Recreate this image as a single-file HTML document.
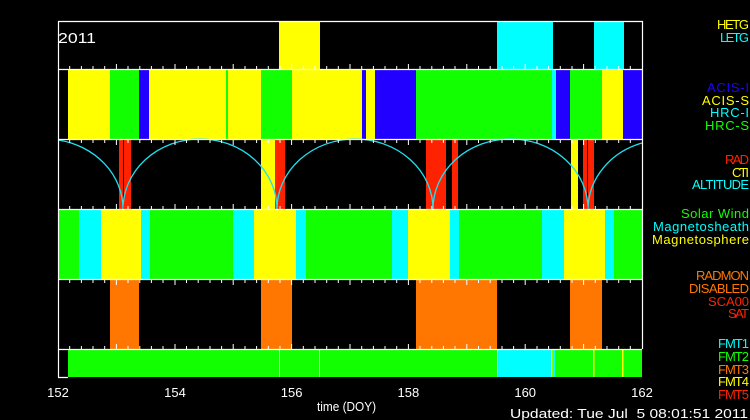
<!DOCTYPE html>
<html><head><style>
html,body{margin:0;padding:0;background:#000;}
svg{display:block;font-family:"Liberation Sans",sans-serif;}
text{white-space:pre;}
</style></head><body>
<svg width="750" height="420" viewBox="0 0 750 420" xmlns="http://www.w3.org/2000/svg">
<rect width="750" height="420" fill="#000"/>
<rect x="279" y="21" width="41" height="48" fill="#ffff00"/>
<rect x="497" y="21" width="56" height="48" fill="#00ffff"/>
<rect x="594" y="21" width="30" height="48" fill="#00ffff"/>
<g transform="translate(0,69)">
<rect x="68" width="42" height="70" fill="#ffff00"/>
<rect x="110" width="29" height="70" fill="#11ff00"/>
<rect x="139" width="10" height="70" fill="#2200ff"/>
<rect x="149" width="112" height="70" fill="#ffff00"/>
<rect x="226" width="2" height="70" fill="#11ff00"/>
<rect x="261" width="31" height="70" fill="#11ff00"/>
<rect x="292" width="70" height="70" fill="#ffff00"/>
<rect x="362" width="4" height="70" fill="#2200ff"/>
<rect x="366" width="9" height="70" fill="#ffff00"/>
<rect x="375" width="41" height="70" fill="#2200ff"/>
<rect x="416" width="136" height="70" fill="#11ff00"/>
<rect x="552" width="4" height="70" fill="#00ffff"/>
<rect x="556" width="14" height="70" fill="#2200ff"/>
<rect x="570" width="32" height="70" fill="#11ff00"/>
<rect x="602" width="21" height="70" fill="#ffff00"/>
<rect x="623" width="19" height="70" fill="#2200ff"/>
</g>
<g transform="translate(0,139)">
<rect x="119" width="12" height="70" fill="#ff2200"/>
<rect x="123" width="1" height="70" fill="#000"/>
<rect x="261" width="14" height="70" fill="#ffff00"/>
<rect x="275" width="10" height="70" fill="#ff2200"/>
<rect x="426" width="20" height="70" fill="#ff2200"/>
<rect x="452" width="6" height="70" fill="#ff2200"/>
<rect x="571" width="7" height="70" fill="#ffff00"/>
<rect x="583" width="4" height="70" fill="#ff2200"/>
<rect x="588" width="6" height="70" fill="#ff2200"/>
</g>
<path d="M58,140 A77.5,70 0 0 1 123,209 A77,70 0 0 1 277,209 A78,70 0 0 1 433,209 A77.5,70 0 0 1 588,209 A77,70 0 0 1 642,143" fill="none" stroke="#22e0f0" stroke-width="1.3"/>
<g transform="translate(0,209)">
<rect x="58" width="584" height="70" fill="#11ff00"/>
<rect x="79" width="22" height="70" fill="#00ffff"/>
<rect x="101" width="40" height="70" fill="#ffff00"/>
<rect x="141" width="9" height="70" fill="#00ffff"/>
<rect x="233" width="21" height="70" fill="#00ffff"/>
<rect x="254" width="42" height="70" fill="#ffff00"/>
<rect x="296" width="10" height="70" fill="#00ffff"/>
<rect x="392" width="16" height="70" fill="#00ffff"/>
<rect x="408" width="42" height="70" fill="#ffff00"/>
<rect x="450" width="9" height="70" fill="#00ffff"/>
<rect x="542" width="22" height="70" fill="#00ffff"/>
<rect x="564" width="41" height="70" fill="#ffff00"/>
<rect x="605" width="9" height="70" fill="#00ffff"/>
</g>
<g transform="translate(0,279)" fill="#ff7700">
<rect x="110" width="29" height="70"/>
<rect x="261" width="31" height="70"/>
<rect x="416" width="81" height="70"/>
<rect x="570" width="32" height="70"/>
</g>
<g transform="translate(0,350)">
<rect x="68" width="574" height="27" fill="#11ff00"/>
<rect x="497" width="54" height="27" fill="#00ffff"/>
<rect x="553" width="2" height="27" fill="#00ffff"/>
<rect x="279" width="1" height="27" fill="#ffff00"/>
<rect x="319" width="1" height="27" fill="#ffff00"/>
<rect x="497" width="1" height="27" fill="#ffff00"/>
<rect x="551" width="1.5" height="27" fill="#ffff00"/>
<rect x="593" width="1.5" height="27" fill="#ffff00"/>
<rect x="622" width="1.5" height="27" fill="#ffff00"/>
</g>
<g stroke="#fff" stroke-width="1.2" fill="none">
<path d="M58.5,377 V21.5 H642.5 V349"/>
<path d="M58,69.5 H642 M58,139.5 H642 M58,209.5 H642 M58,279.5 H642 M58,349.5 H642 M58,377.5 H68"/>
</g>
<g stroke="#fff" stroke-width="1" id="tk">
<path d="M69.7,349v-3 M81.4,349v-3 M93,349v-3 M104.7,349v-3 M116.4,349v-5 M128,349v-3 M139.8,349v-3 M151.4,349v-3 M163,349v-3 M175,349v-5 M186.5,349v-3 M198.2,349v-3 M210,349v-3 M221.6,349v-3 M233.2,349v-5 M245,349v-3 M256.6,349v-3 M268.3,349v-3 M280,349v-3 M291.6,349v-5 M303.3,349v-3 M315,349v-3 M326.7,349v-3 M338.3,349v-3 M350,349v-5 M361.7,349v-3 M373.4,349v-3 M385,349v-3 M396.7,349v-3 M408.4,349v-5 M420,349v-3 M431.8,349v-3 M443.4,349v-3 M455,349v-3 M466.8,349v-5 M478.5,349v-3 M490.2,349v-3 M502,349v-3 M513.6,349v-3 M525.2,349v-5 M537,349v-3 M548.6,349v-3 M560.3,349v-3 M572,349v-3 M583.6,349v-5 M595.3,349v-3 M607,349v-3 M618.7,349v-3 M630.3,349v-3"/>
</g>
<use href="#tk" transform="translate(0,629) scale(1,-1)"/>
<use href="#tk" transform="translate(0,489) scale(1,-1)"/>
<use href="#tk" transform="translate(0,-280)"/>
<use href="#tk" transform="translate(0,-140)"/>
<text x="58" y="43" fill="#fff" font-size="15" textLength="38" lengthAdjust="spacingAndGlyphs">2011</text>
<g fill="#fff" font-size="13" text-anchor="middle">
<text x="58" y="397">152</text><text x="175" y="397">154</text><text x="291.6" y="397">156</text>
<text x="408.4" y="397">158</text><text x="525.2" y="397">160</text><text x="642" y="397">162</text>
</g>
<text x="317" y="411" fill="#fff" font-size="13" textLength="59" lengthAdjust="spacingAndGlyphs">time (DOY)</text>
<text x="510" y="418" fill="#fff" font-size="13" textLength="238" lengthAdjust="spacingAndGlyphs">Updated: Tue Jul  5 08:01:51 2011</text>
<g font-size="13" lengthAdjust="spacingAndGlyphs">
<text x="717" y="29" fill="#ffff00" textLength="32">HETG</text>
<text x="720" y="42" fill="#00ffff" textLength="29">LETG</text>
<text x="707" y="92" fill="#2200ff" textLength="42">ACIS-I</text>
<text x="702" y="105" fill="#ffff00" textLength="47">ACIS-S</text>
<text x="710" y="117" fill="#00ffff" textLength="39">HRC-I</text>
<text x="705" y="130" fill="#11ff00" textLength="44">HRC-S</text>
<text x="725" y="164" fill="#ff2200" textLength="24">RAD</text>
<text x="732" y="177" fill="#ffff00" textLength="17">CTI</text>
<text x="692" y="189" fill="#00ffff" textLength="57">ALTITUDE</text>
<text x="681" y="218" fill="#11ff00" textLength="68">Solar Wind</text>
<text x="653" y="231" fill="#00ffff" textLength="96">Magnetosheath</text>
<text x="652" y="244" fill="#ffff00" textLength="97">Magnetosphere</text>
<text x="696" y="280" fill="#ff7700" textLength="53">RADMON</text>
<text x="689" y="293" fill="#ff7700" textLength="60">DISABLED</text>
<text x="708" y="306" fill="#ff2200" textLength="41">SCA00</text>
<text x="728" y="318" fill="#ff2200" textLength="21">SAT</text>
<text x="718" y="348" fill="#00ffff" textLength="31">FMT1</text>
<text x="718" y="361" fill="#11ff00" textLength="31">FMT2</text>
<text x="718" y="374" fill="#ff7700" textLength="31">FMT3</text>
<text x="718" y="386" fill="#ffff00" textLength="31">FMT4</text>
<text x="718" y="399" fill="#ff2200" textLength="31">FMT5</text>
</g>
</svg>
</body></html>
